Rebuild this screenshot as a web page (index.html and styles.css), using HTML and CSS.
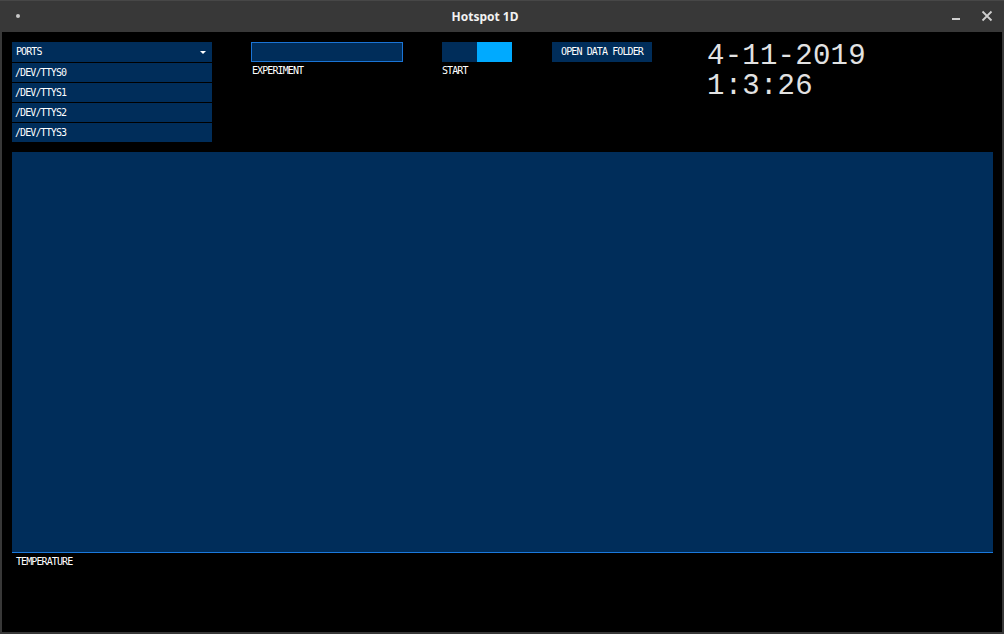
FILE: index.html
```html
<!DOCTYPE html>
<html>
<head>
<meta charset="utf-8">
<title>Hotspot 1D</title>
<link rel="stylesheet" href="styles.css">
</head>
<body>
<div class="window">
  <div class="titlebar">
    <span class="dot"></span>
    <span class="title">Hotspot 1D</span>
    <div class="winbtns">
      <svg class="minbtn" width="10" height="10" viewBox="0 0 10 10"><rect x="1" y="7" width="8" height="2" fill="#cfcfcf"/></svg>
      <svg class="closebtn" width="12" height="12" viewBox="0 0 12 12"><path d="M1.5 1.5 L10.5 10.5 M10.5 1.5 L1.5 10.5" stroke="#cfcfcf" stroke-width="1.8"/></svg>
    </div>
  </div>
  <div class="content">
    <div class="controls">
      <div class="ports">
        <div class="ports-head"><span class="px">PORTS</span><span class="caret"></span></div>
        <div class="ports-item"><span class="px">/DEV/TTYS0</span></div>
        <div class="ports-item"><span class="px">/DEV/TTYS1</span></div>
        <div class="ports-item"><span class="px">/DEV/TTYS2</span></div>
        <div class="ports-item"><span class="px">/DEV/TTYS3</span></div>
      </div>
      <div class="field">
        <div class="textbox"></div>
        <div class="px label">EXPERIMENT</div>
      </div>
      <div class="toggle-wrap">
        <div class="toggle"><span class="off"></span><span class="on"></span></div>
        <div class="px label">START</div>
      </div>
      <div class="button"><span class="px">OPEN DATA FOLDER</span></div>
      <div class="clock">
        <div>4-11-2019</div>
        <div>1:3:26</div>
      </div>
    </div>
    <div class="chart"></div>
    <div class="px chart-label">TEMPERATURE</div>
  </div>
</div>
</body>
</html>
```

FILE: styles.css
```css
* { box-sizing: border-box; }
html, body {
  margin: 0;
  padding: 0;
  background: #383838;
}
.window {
  width: 1004px;
  height: 634px;
  display: flex;
  flex-direction: column;
  background: #383838;
}
.titlebar {
  height: 32px;
  position: relative;
  display: flex;
  align-items: center;
  justify-content: center;
  background: #383838;
  border-top: 1px solid #474747;
}
.dot {
  position: absolute;
  left: 16px;
  top: 13px;
  width: 4px;
  height: 4px;
  border-radius: 50%;
  background: #c8c8c8;
}
.title {
  font-family: "Noto Sans", sans-serif;
  font-weight: bold;
  font-size: 12px;
  color: #f2f2f2;
  margin-left: -34px;
  margin-top: -1px;
}
.winbtns {
  position: absolute;
  right: 11px;
  top: 9px;
  display: flex;
  gap: 20px;
  align-items: center;
}
.content {
  flex: 1;
  margin: 0 2px 2px 2px;
  background: #000;
  padding: 10px 10px 0 10px;
}
.px {
  font-family: "DejaVu Sans Mono", monospace;
  font-size: 10px;
  letter-spacing: -0.9px;
  color: #fff;
  line-height: 10px;
}
.controls {
  height: 110px;
  display: flex;
  align-items: flex-start;
}
.ports {
  width: 200px;
  display: flex;
  flex-direction: column;
  gap: 1px;
}
.ports-head {
  height: 20px;
  background: #002d5a;
  display: flex;
  align-items: center;
  justify-content: space-between;
  padding: 0 6px 0 4px;
}
.caret {
  width: 0;
  height: 0;
  border-left: 3px solid transparent;
  border-right: 3px solid transparent;
  border-top: 3px solid #fff;
}
.ports-item {
  height: 19px;
  background: #002d5a;
  display: flex;
  align-items: center;
  padding-left: 3px;
}
.field {
  margin-left: 39px;
  width: 152px;
}
.textbox {
  height: 20px;
  background: #002d5a;
  border: 1px solid #1a74d6;
}
.label {
  margin-top: 4px;
  padding-left: 1px;
}
.toggle-wrap {
  margin-left: 39px;
  width: 70px;
}
.toggle {
  height: 20px;
  display: flex;
}
.toggle .off {
  flex: 1;
  background: #002d5a;
}
.toggle .on {
  flex: 1;
  background: #00aaff;
}
.toggle-wrap .label { padding-left: 0; }
.button {
  margin-left: 40px;
  width: 100px;
  height: 20px;
  background: #002d5a;
  display: flex;
  align-items: center;
  justify-content: center;
}
.clock {
  margin-left: 55px;
  font-family: "Liberation Mono", monospace;
  font-size: 29px;
  letter-spacing: 0.25px;
  line-height: 30px;
  color: #e2e2e2;
}
.chart {
  height: 401px;
  background: #002d5a;
  border-bottom: 1px solid #1a78dc;
  margin-right: -1px;
}
.chart-label {
  margin-top: 4px;
  padding-left: 4px;
}
```
